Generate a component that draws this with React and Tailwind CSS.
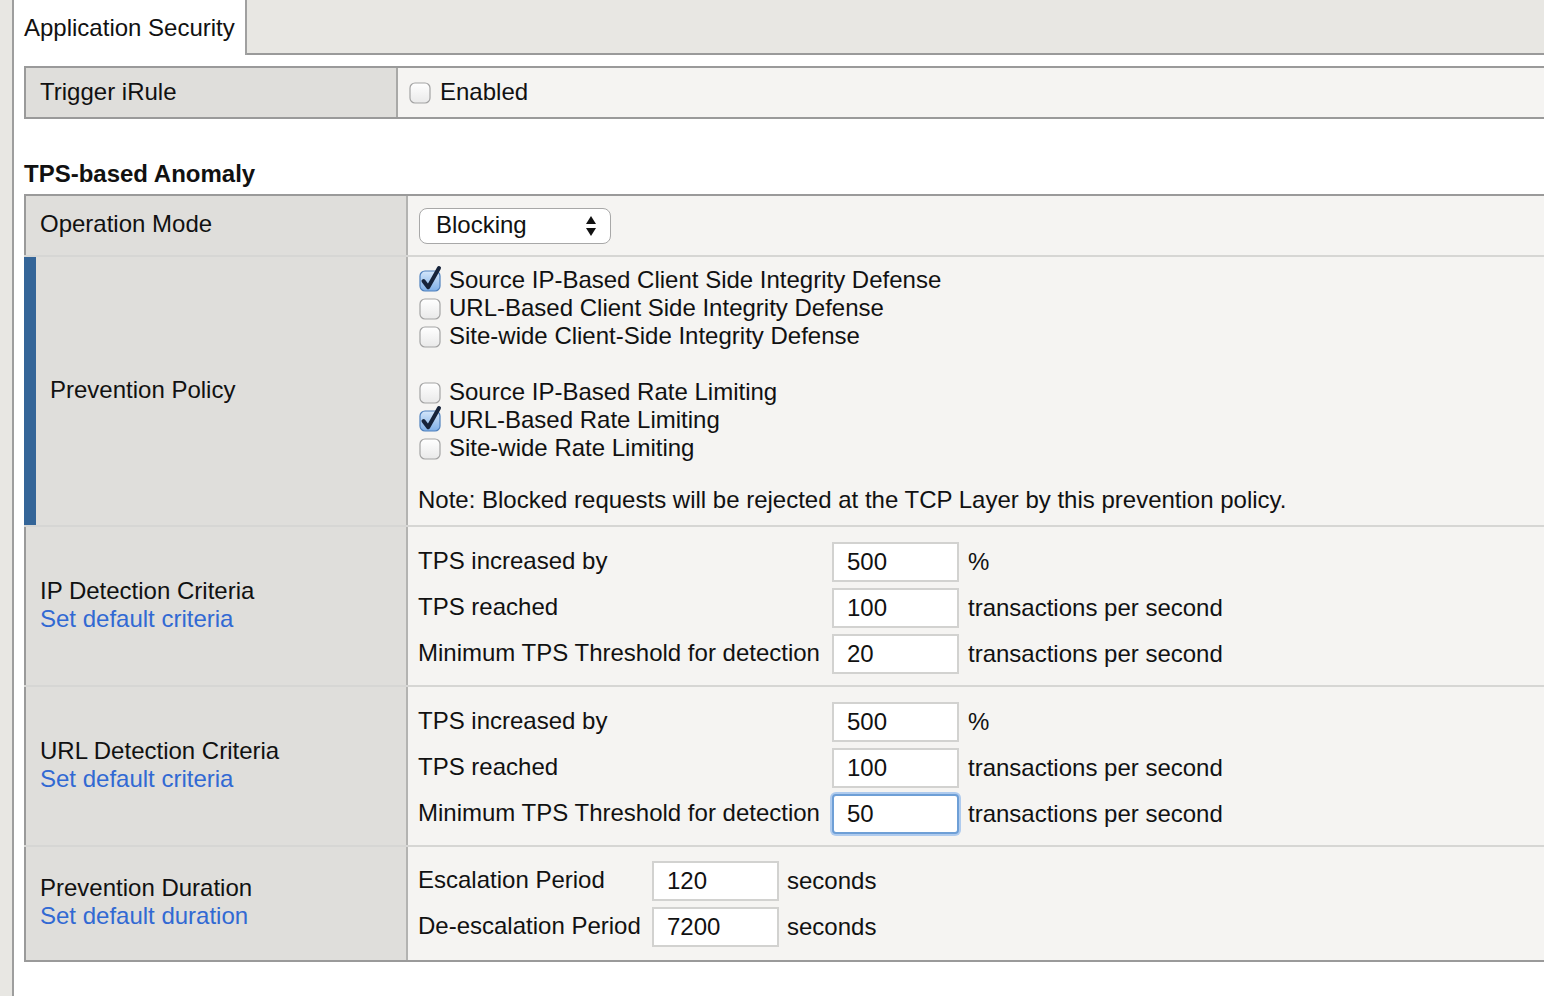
import React from 'react';

const FONT = { fontFamily: '"Liberation Sans", Arial, sans-serif' };

const Box = ({ checked }) => (
  <svg width="22" height="22" viewBox="0 0 22 22" className="shrink-0 overflow-visible">
    <defs>
      <linearGradient id="cbOff" x1="0" y1="0" x2="0" y2="1">
        <stop offset="0" stopColor="#ffffff" />
        <stop offset="1" stopColor="#e9e9e9" />
      </linearGradient>
      <linearGradient id="cbOn" x1="0" y1="0" x2="0" y2="1">
        <stop offset="0" stopColor="#d4e6fa" />
        <stop offset="1" stopColor="#7fb0e8" />
      </linearGradient>
    </defs>
    <rect
      x="1"
      y="1"
      width="20"
      height="20"
      rx="5"
      fill={checked ? 'url(#cbOn)' : 'url(#cbOff)'}
      stroke={checked ? '#4f80bd' : '#a3a3a3'}
      strokeWidth="1.2"
    />
    {checked && (
      <path
        d="M4.5 11 L9.2 17.2 L20 -2"
        fill="none"
        stroke="#16233a"
        strokeWidth="4"
        strokeLinecap="round"
        strokeLinejoin="round"
      />
    )}
  </svg>
);

const Check = ({ checked, children }) => (
  <div className="flex items-center h-[28px] gap-[8px] pl-px">
    <Box checked={checked} />
    <span className="-mt-[2px]">{children}</span>
  </div>
);

const Field = ({ value, focused, w = 'w-[127px]' }) => (
  <div
    className={`${w} h-[40px] shrink-0 bg-white flex items-center pl-[13px] ${
      focused
        ? 'border-2 border-[#6e9fd6] rounded-[4px] shadow-[0_0_0_2px_#afcbee]'
        : 'border-2 border-[#d2d2d0]'
    }`}
  >
    {value}
  </div>
);

const Label = ({ title, link, bar }) => (
  <div
    className={`w-[384px] shrink-0 bg-[#dfdedb] border-r-2 border-r-[#b3b3b1] pl-[14px] pb-[3px] flex flex-col justify-center ${
      bar ? 'border-l-[12px] border-l-[#346598]' : 'border-l-2 border-l-[#9a9a9a]'
    }`}
  >
    <div className="leading-[28px]">{title}</div>
    {link && <div className="leading-[28px] text-[#3169d3]">{link}</div>}
  </div>
);

const Criteria = ({ rows }) => (
  <div className="flex flex-col gap-[6px] pt-[15px] pb-[11px]">
    {rows.map((r, i) => (
      <div key={i} className="grid grid-cols-[414px_127px_auto] items-center">
        <span className="-mt-[2px]">{r[0]}</span>
        <Field value={r[1]} focused={r[3]} />
        <span className="pl-[9px]">{r[2]}</span>
      </div>
    ))}
  </div>
);

export default function App() {
  return (
    <div
      style={FONT}
      className="flex h-[996px] w-[1544px] overflow-hidden bg-white text-[24px] text-[#111]"
    >
      {/* left strip */}
      <div className="w-[14px] shrink-0 bg-[#e8e7e3] border-r-2 border-[#9e9e9e]" />

      <div className="flex-1 flex flex-col">
        {/* tabs */}
        <div className="flex h-[55px] shrink-0">
          <div className="w-[233px] bg-white border-r-2 border-[#a0a0a0] pl-[10px] flex items-center">
            Application Security
          </div>
          <div className="flex-1 bg-[#e8e7e3] border-b-2 border-[#9a9a9a]" />
        </div>

        {/* Trigger iRule */}
        <div className="ml-[10px] mt-[11px] flex h-[53px] border-t-2 border-b-2 border-[#9a9a9a]">
          <div className="w-[374px] shrink-0 bg-[#dfdedb] border-l-2 border-l-[#9a9a9a] border-r-2 border-r-[#a9a9a7] pl-[14px] pb-[2px] flex items-center">
            Trigger iRule
          </div>
          <div className="flex-1 bg-[#f5f4f2] pl-[11px] flex items-center gap-[9px]">
            <Box />
            <span className="-mt-[2px]">Enabled</span>
          </div>
        </div>

        <div className="ml-[10px] mt-[42px] mb-[7px] font-bold leading-[26px]">
          TPS-based Anomaly
        </div>

        {/* TPS table */}
        <div className="ml-[10px] border-t-2 border-b-2 border-[#9a9a9a]">
          <div className="flex h-[61px] border-b-2 border-[#d6d6d4]">
            <Label title="Operation Mode" />
            <div className="flex-1 bg-[#f5f4f2] pl-[11px] flex items-center">
              <div className="w-[192px] h-[36px] bg-white border border-[#a8a8a8] rounded-[8px] pl-[16px] pr-[14px] flex items-center justify-between">
                <span className="-mt-[2px]">Blocking</span>
                <svg width="10" height="22" viewBox="0 0 10 22">
                  <polygon points="0,9 5,1 10,9" fill="#111" />
                  <polygon points="0,13 5,21 10,13" fill="#111" />
                </svg>
              </div>
            </div>
          </div>

          <div className="flex border-b-2 border-[#d6d6d4]">
            <Label title="Prevention Policy" bar />
            <div className="flex-1 bg-[#f5f4f2] pl-[10px] pt-[10px] pb-[10px]">
              <Check checked>Source IP-Based Client Side Integrity Defense</Check>
              <Check>URL-Based Client Side Integrity Defense</Check>
              <Check>Site-wide Client-Side Integrity Defense</Check>
              <div className="h-[28px]" />
              <Check>Source IP-Based Rate Limiting</Check>
              <Check checked>URL-Based Rate Limiting</Check>
              <Check>Site-wide Rate Limiting</Check>
              <div className="mt-[24px] -translate-y-[1px] leading-[28px]">
                Note: Blocked requests will be rejected at the TCP Layer by this prevention policy.
              </div>
            </div>
          </div>

          <div className="flex border-b-2 border-[#d6d6d4]">
            <Label title="IP Detection Criteria" link="Set default criteria" />
            <div className="flex-1 bg-[#f5f4f2] pl-[10px]">
              <Criteria
                rows={[
                  ['TPS increased by', '500', '%'],
                  ['TPS reached', '100', 'transactions per second'],
                  ['Minimum TPS Threshold for detection', '20', 'transactions per second'],
                ]}
              />
            </div>
          </div>

          <div className="flex border-b-2 border-[#d6d6d4]">
            <Label title="URL Detection Criteria" link="Set default criteria" />
            <div className="flex-1 bg-[#f5f4f2] pl-[10px]">
              <Criteria
                rows={[
                  ['TPS increased by', '500', '%'],
                  ['TPS reached', '100', 'transactions per second'],
                  ['Minimum TPS Threshold for detection', '50', 'transactions per second', true],
                ]}
              />
            </div>
          </div>

          <div className="flex">
            <Label title="Prevention Duration" link="Set default duration" />
            <div className="flex-1 bg-[#f5f4f2] pl-[10px] pt-[14px] pb-[13px] flex flex-col gap-[6px]">
              {[
                ['Escalation Period', '120'],
                ['De-escalation Period', '7200'],
              ].map((r) => (
                <div key={r[0]} className="grid grid-cols-[234px_127px_auto] items-center">
                  <span className="-mt-[2px]">{r[0]}</span>
                  <Field value={r[1]} />
                  <span className="pl-[8px]">seconds</span>
                </div>
              ))}
            </div>
          </div>
        </div>
      </div>
    </div>
  );
}
